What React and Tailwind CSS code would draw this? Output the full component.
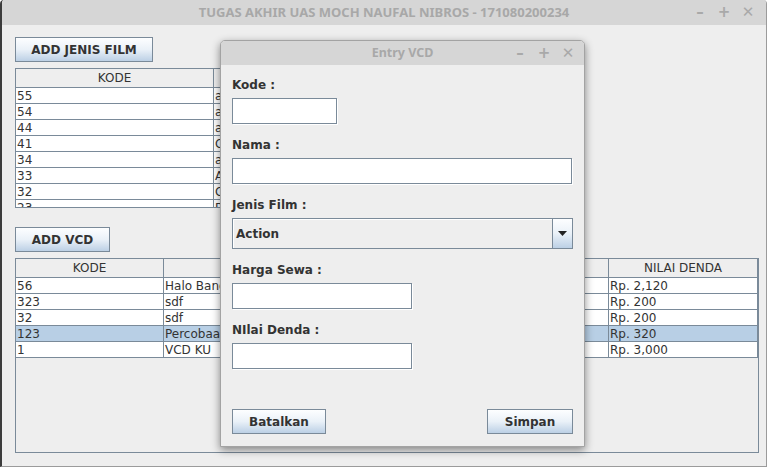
import React from 'react';

const bodyFont = { fontFamily: '"DejaVu Sans", Verdana, sans-serif' };
const titleFont = { fontFamily: '"Noto Sans", "DejaVu Sans", sans-serif' };

const jenisFilm = [
  ['55', 'aksi'],
  ['54', 'animasi'],
  ['44', 'anime'],
  ['41', 'Comedy'],
  ['34', 'asd'],
  ['33', 'Action'],
  ['32', 'Cartoon'],
  ['23', 'Drama'],
];

const vcd = [
  ['56', 'Halo Bandung', 'Action', 'Rp. 10,600', 'Rp. 2,120'],
  ['323', 'sdf', 'Comedy', 'Rp. 1,000', 'Rp. 200'],
  ['32', 'sdf', 'aksi', 'Rp. 1,000', 'Rp. 200'],
  ['123', 'Percobaan', 'Action', 'Rp. 1,600', 'Rp. 320'],
  ['1', 'VCD KU', 'Drama', 'Rp. 15,000', 'Rp. 3,000'],
];

function MetalButton({ children, className = '' }) {
  return (
    <button
      className={`h-[25px] border border-[#7a8a99] bg-linear-to-b from-[#fdfeff] via-[#eaf1f8] to-[#bcd0e5] text-[12px] font-bold text-[#333] ${className}`}
    >
      {children}
    </button>
  );
}

function TextField({ className = '' }) {
  return (
    <div
      className={`h-[26px] border border-[#7a8a99] bg-white shadow-[1px_1px_0_#ffffff] ${className}`}
    />
  );
}

function Controls({ className = '' }) {
  return (
    <div className={`flex items-center text-[15px] font-bold text-[#a9a9a9] ${className}`}>
      <span className="w-[24px] text-center">–</span>
      <span className="w-[24px] text-center">+</span>
      <span className="w-[24px] text-center">✕</span>
    </div>
  );
}

function Label({ children }) {
  return <div className="h-[14px] text-[12px] font-bold leading-[14px] text-[#333]">{children}</div>;
}

export default function App() {
  return (
    <div
      className="relative flex h-[467px] w-[767px] flex-col overflow-hidden rounded-t-[4px] border-r border-b border-l-2 border-r-[#9b9b9b] border-b-[#9b9b9b] border-l-[#3c3c3c] bg-[#eeeeee]"
      style={bodyFont}
    >
      {/* title bar */}
      <div className="grid h-[25px] shrink-0 grid-cols-[1fr_auto_1fr] items-center bg-[#d6d6d6]">
        <div />
        <div className="text-[13px] font-bold text-[#a8a8a8]" style={titleFont}>
          TUGAS AKHIR UAS MOCH NAUFAL NIBROS - 171080200234
        </div>
        <Controls className="justify-end pr-[6px]" />
      </div>

      {/* main content */}
      <div className="flex flex-1 flex-col pt-[12px] pl-[13px]">
        <MetalButton className="w-[138px]">ADD JENIS FILM</MetalButton>

        <div className="mt-[6px] h-[139px] w-[398px] overflow-hidden border-t border-l border-[#7a8a99] text-[12px] text-[#333]">
          <div className="grid h-[19px] grid-cols-[198px_198px] border-b border-[#7a8a99] bg-[#eeeeee] leading-[18px]">
            <div className="border-r border-[#7a8a99] text-center">KODE</div>
            <div className="border-r border-[#7a8a99] text-center">NAMA</div>
          </div>
          {jenisFilm.map((row) => (
            <div key={row[0]} className="grid h-[16px] grid-cols-[198px_198px] border-b border-[#7a8a99] bg-white leading-[16px]">
              <div className="border-r border-[#7a8a99] pl-[1px]">{row[0]}</div>
              <div className="border-r border-[#7a8a99] pl-[1px]">{row[1]}</div>
            </div>
          ))}
        </div>
        <div className="h-px w-[398px] bg-[#7a8a99]" />

        <MetalButton className="mt-[19px] w-[95px]">ADD VCD</MetalButton>

        <div className="mt-[6px] flex h-[195px] w-[744px] flex-col overflow-hidden border border-[#7a8a99] text-[12px] text-[#333]">
          <div className="grid h-[19px] grid-cols-[148px_148px_148px_149px_149px] border-b border-[#7a8a99] leading-[18px]">
            <div className="border-r border-[#7a8a99] text-center">KODE</div>
            <div className="border-r border-[#7a8a99] text-center">VCD</div>
            <div className="border-r border-[#7a8a99] text-center">JENIS FILM</div>
            <div className="border-r border-[#7a8a99] text-center">HARGA SEWA</div>
            <div className="border-r border-[#7a8a99] text-center">NILAI DENDA</div>
          </div>
          {vcd.map((row) => (
            <div
              key={row[0]}
              className={`grid h-[16px] grid-cols-[148px_148px_148px_149px_149px] border-b border-[#7a8a99] leading-[16px] ${row[0] === '123' ? 'bg-[#b8cfe5]' : 'bg-white'}`}
            >
              {row.map((cell, i) => (
                <div key={i} className="overflow-hidden border-r border-[#7a8a99] pl-[1px] whitespace-nowrap">
                  {cell}
                </div>
              ))}
            </div>
          ))}
        </div>
      </div>

      {/* dialog window */}
      <div className="absolute top-[40px] left-[218px] flex h-[407px] w-[365px] flex-col overflow-hidden rounded-t-[5px] border border-[#a3a3a3] bg-[#eeeeee] shadow-[0_3px_8px_rgba(0,0,0,0.45)]">
        <div className="grid h-[24px] shrink-0 grid-cols-[1fr_auto_1fr] items-center bg-[#d6d6d6]">
          <div />
          <div className="text-[12.5px] font-bold text-[#a8a8a8]" style={titleFont}>
            Entry VCD
          </div>
          <Controls className="justify-end pr-[4px]" />
        </div>

        <div className="flex flex-1 flex-col px-[11px] pt-[13px] pb-[12px]">
          <Label>Kode :</Label>
          <TextField className="mt-[6px] w-[105px]" />

          <div className="mt-[14px]">
            <Label>Nama :</Label>
          </div>
          <TextField className="mt-[6px] w-[340px]" />

          <div className="mt-[14px]">
            <Label>Jenis Film :</Label>
          </div>
          <div className="mt-[6px] flex h-[31px] w-[341px] border border-[#7a8a99] bg-[#eeeeee]">
            <div className="flex flex-1 items-center border-t border-l border-white pl-[2px] text-[12px] font-bold text-[#333]">
              Action
            </div>
            <div className="flex w-[20px] items-center justify-center border-l border-[#7a8a99] bg-linear-to-b from-[#fdfeff] via-[#eaf1f8] to-[#bcd0e5]">
              <svg width="9" height="5" viewBox="0 0 9 5">
                <path d="M0 0H9L4.5 5Z" fill="#222" />
              </svg>
            </div>
          </div>

          <div className="mt-[14px]">
            <Label>Harga Sewa :</Label>
          </div>
          <TextField className="mt-[6px] w-[180px]" />

          <div className="mt-[14px]">
            <Label>NIlai Denda :</Label>
          </div>
          <TextField className="mt-[6px] w-[180px]" />

          <div className="mt-auto flex items-center justify-between">
            <MetalButton className="w-[94px]">Batalkan</MetalButton>
            <MetalButton className="w-[86px]">Simpan</MetalButton>
          </div>
        </div>
      </div>
    </div>
  );
}
